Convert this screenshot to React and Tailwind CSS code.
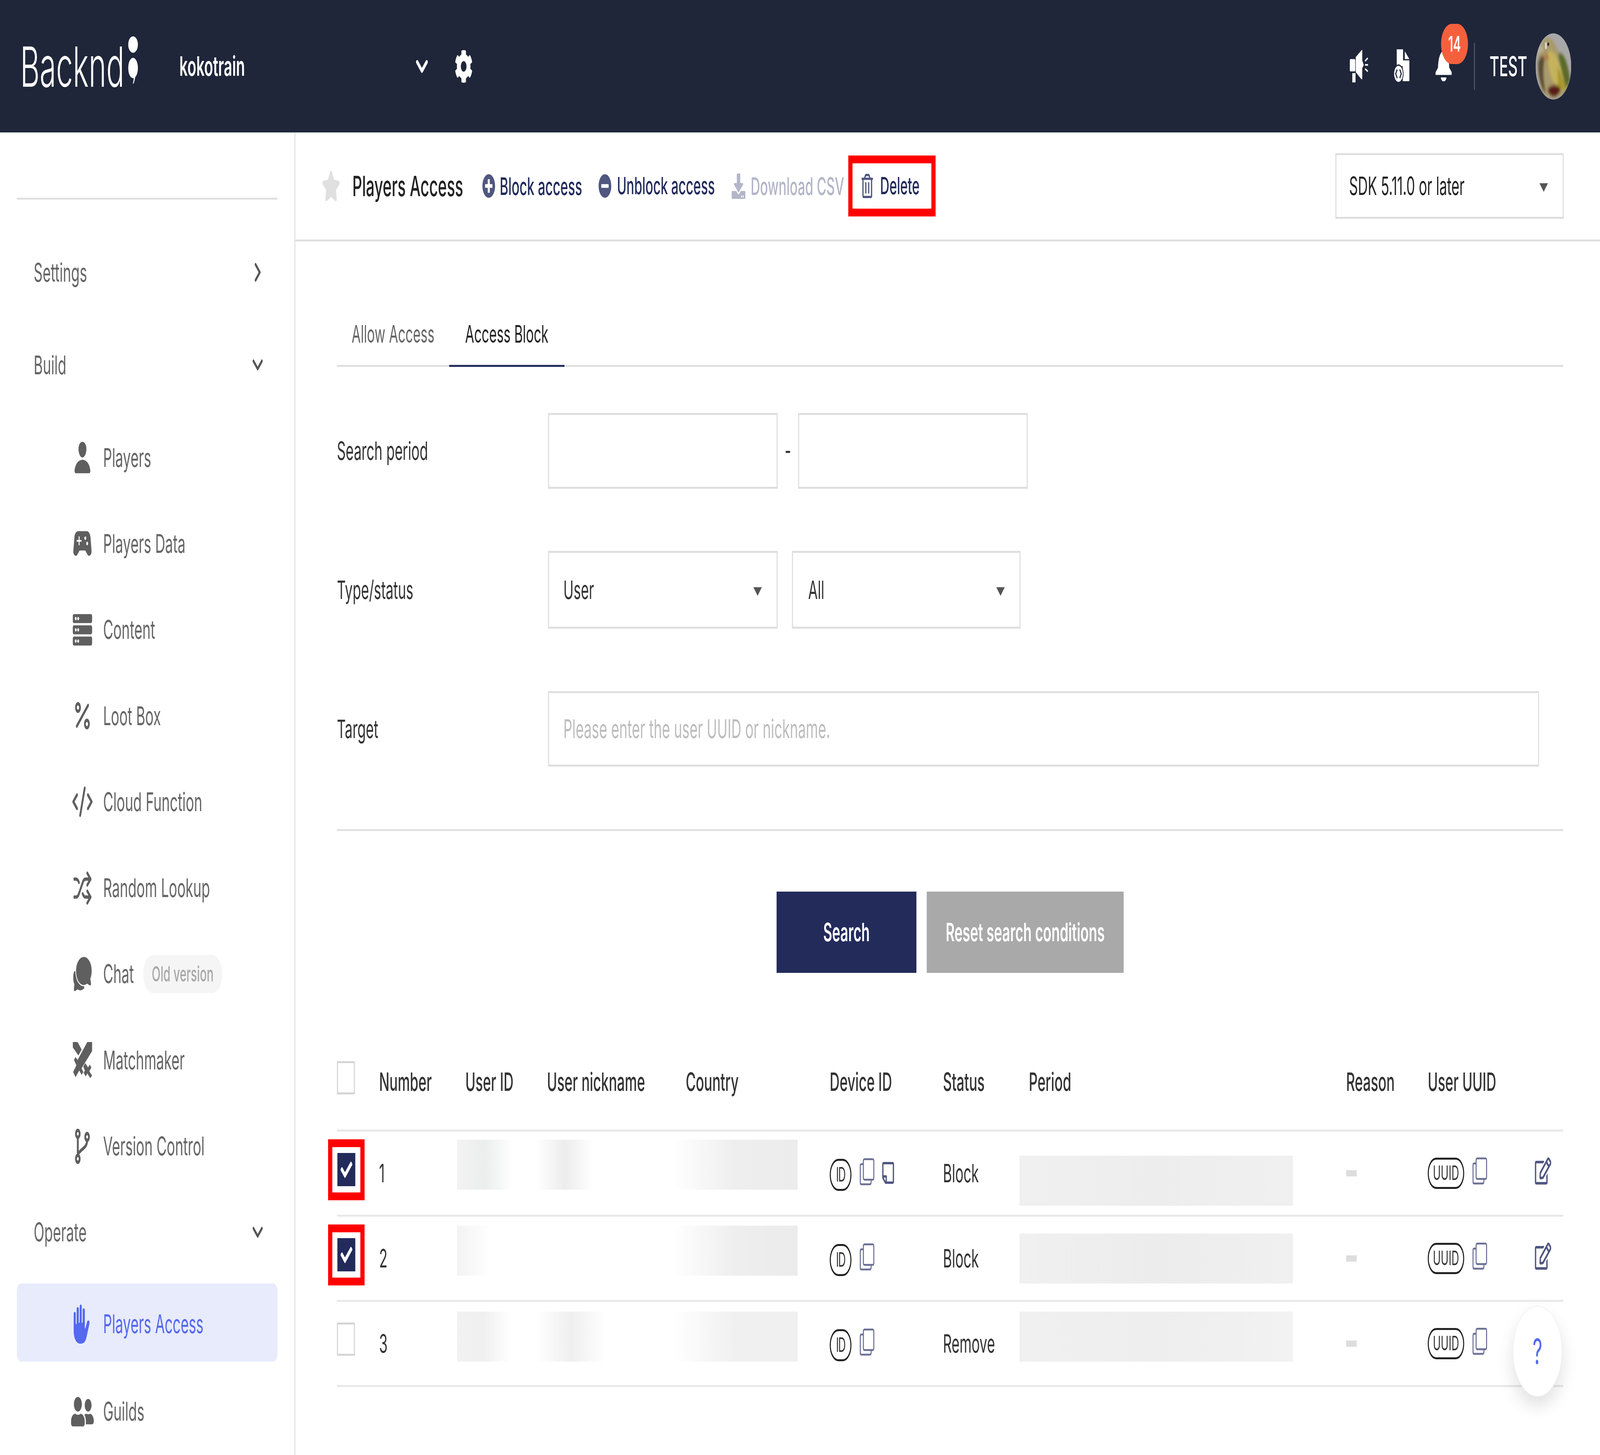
import React from "react";
import { ChevronDown, ChevronRight, Percent, CodeXml, Shuffle } from "lucide-react";
import {
  FaCog, FaStar, FaPlusCircle, FaMinusCircle, FaDownload, FaRegTrashAlt, FaRegEdit,
  FaRegStickyNote, FaCheck, FaServer, FaUserFriends,
} from "react-icons/fa";
import { IoPerson, IoChatbubbles, IoHandLeft } from "react-icons/io5";
import { MdSportsEsports } from "react-icons/md";

function Megaphone() {
  return (
    <svg viewBox="0 0 260 250" className="h-[83px] w-[87px] fill-white">
      <rect x="0" y="70" width="78" height="95" rx="12" />
      <path d="M85 55 L170 0 H178 V80 L200 115 L178 140 V225 H165 L85 170Z" />
      <rect x="36" y="178" width="46" height="72" />
      <path d="M218 85 L258 62 M218 115 H262 M218 145 L258 165" stroke="#fff" strokeWidth="13" fill="none" />
    </svg>
  );
}

function DocIcon() {
  return (
    <svg viewBox="0 0 225 260" className="h-[87px] w-[75px] fill-white">
      <path d="M45 0 H135 V85 H225 V245 H130 V130 H45Z" />
      <path d="M160 15 L225 75 H160Z" />
      <circle cx="70" cy="188" r="72" fill="#1f263a" />
      <circle cx="70" cy="188" r="62" />
      <path d="M52 155 L30 188 L52 221 M88 155 L110 188 L88 221" stroke="#1f263a" strokeWidth="14" fill="none" />
    </svg>
  );
}

function BellIcon() {
  return (
    <svg viewBox="0 0 230 240" className="h-[80px] w-[77px] fill-white">
      <path d="M115 0 C90 0 40 30 35 130 L0 165 V185 H230 V165 L195 130 C190 30 140 0 115 0Z" />
      <path d="M75 205 H155 C150 245 80 245 75 205Z" />
    </svg>
  );
}

function Avatar() {
  return (
    <svg viewBox="75 40 500 510" className="h-[172px] w-[168px]">
      <defs>
        <clipPath id="av"><circle cx="325" cy="295" r="252" /></clipPath>
        <filter id="soft"><feGaussianBlur stdDeviation="14" /></filter>
      </defs>
      <g clipPath="url(#av)">
        <rect x="0" y="0" width="700" height="700" fill="#a9a8a8" />
        <g filter="url(#soft)">
          <path d="M120 180 C160 70 260 50 330 110 C400 150 480 340 520 470 C450 560 220 560 150 470 C100 380 90 260 120 180Z" fill="#a89a6c" />
          <path d="M390 200 C460 170 530 260 560 400 L510 460 C460 380 420 290 390 200Z" fill="#5c6a2b" />
          <path d="M250 180 C340 150 420 260 500 470 C440 500 340 450 290 370 C250 300 240 240 250 180Z" fill="#c4b25c" />
          <path d="M380 300 C430 340 470 400 510 460 C470 490 420 470 390 440Z" fill="#a9982f" />
          <path d="M110 260 C150 210 180 200 200 240 C170 330 190 430 220 500 C140 470 100 340 110 260Z" fill="#5c4d38" />
          <path d="M240 470 C310 420 390 430 430 470 C390 540 280 550 240 470Z" fill="#5a1d12" />
          <path d="M190 220 C220 180 260 190 260 240 C240 260 200 250 190 220Z" fill="#b47c4a" />
          <path d="M100 170 C130 130 170 130 190 160 C170 190 130 190 100 210Z" fill="#bbb096" />
        </g>
        <rect x="205" y="112" width="28" height="50" fill="#d8d2c8" />
        <circle cx="252" cy="126" r="13" fill="#2c2520" />
      </g>
    </svg>
  );
}

function Swords() {
  return (
    <svg viewBox="0 0 96 96" className="size-[92px] fill-current">
      <path d="M96 0 H72 L24 48 L14 40 L6 48 L18 62 L2 80 L14 94 L32 76 L44 88 L52 80 L44 70 L96 24Z" />
      <path d="M0 0 H24 L44 20 L28 36 L0 14Z" />
      <path d="M62 56 L76 68 L84 60 L92 68 L82 78 L96 90 L86 96 L72 84 L64 92 L54 82 L60 76 L52 66Z" />
    </svg>
  );
}

function Branch() {
  return (
    <svg viewBox="0 0 24 24" className="size-[96px] fill-none stroke-current stroke-[2.2]">
      <circle cx="7" cy="4" r="2.2" />
      <circle cx="7" cy="20" r="2.2" />
      <circle cx="18" cy="6" r="2.2" />
      <path d="M7 6.2 V17.8 M18 8.2 C18 13 12 13 7 17" />
    </svg>
  );
}

function CopyIcon() {
  return (
    <svg viewBox="0 0 72 72" className="h-[70px] w-[72px] shrink-0 fill-none stroke-[#6b7096] stroke-[5]">
      <rect x="18" y="3" width="51" height="54" rx="5" />
      <path d="M18 16 H8 Q3 16 3 21 V64 Q3 69 8 69 H50 Q56 69 56 62 V57" />
    </svg>
  );
}

function NavItem({ icon, label, badge }) {
  return (
    <div className="flex h-[220.3px] items-center text-[#666666]">
      <div className="flex w-[489px] justify-end pr-[52px] text-[#5f5f5f]">{icon}</div>
      <span>{label}</span>
      {badge}
    </div>
  );
}

function Sidebar() {
  return (
    <aside className="h-full w-[1401px] shrink-0 border-r-[5px] border-[#e2e2e2] text-[66px]">
      <div className="ml-[80px] mt-[167px] h-[5px] w-[1236px] bg-[#e0e0e0]" />
      <div className="ml-[160px] mr-[150px] mt-[76px] flex h-[220px] items-center justify-between text-[#666666]">
        <span>Settings</span>
        <ChevronRight className="mr-[-16px] size-[80px] text-[#555555]" strokeWidth={2.4} />
      </div>
      <div className="ml-[160px] mr-[150px] mt-[17px] flex h-[220px] items-center justify-between text-[#666666]">
        <span>Build</span>
        <ChevronDown className="mr-[-16px] size-[80px] text-[#555555]" strokeWidth={2.4} />
      </div>
      <div className="mt-[17px]">
        <NavItem icon={<IoPerson className="size-[92px]" />} label="Players" />
        <NavItem icon={<MdSportsEsports className="size-[108px] mr-[-8px]" />} label="Players Data" />
        <NavItem icon={<FaServer className="size-[92px] -scale-x-100" />} label="Content" />
        <NavItem icon={<Percent className="size-[92px]" strokeWidth={2.2} />} label="Loot Box" />
        <NavItem icon={<CodeXml className="size-[104px] mr-[-6px]" strokeWidth={2} />} label="Cloud Function" />
        <NavItem icon={<Shuffle className="size-[92px]" strokeWidth={2.2} />} label="Random Lookup" />
        <NavItem
          icon={<IoChatbubbles className="size-[100px] mr-[-4px]" />}
          label="Chat"
          badge={
            <span className="ml-[44px] flex h-[98px] w-[375px] items-center justify-center rounded-full bg-[#f5f5f5] text-[54px] font-medium text-[#a8a8a8]">
              Old version
            </span>
          }
        />
        <NavItem icon={<Swords />} label="Matchmaker" />
        <NavItem icon={<Branch />} label="Version Control" />
      </div>
      <div className="ml-[160px] mr-[150px] flex h-[220px] items-center justify-between text-[#666666]">
        <span>Operate</span>
        <ChevronDown className="mr-[-16px] size-[80px] text-[#555555]" strokeWidth={2.4} />
      </div>
      <div className="ml-[80px] mt-[21px] flex h-[200px] w-[1236px] items-center rounded-[20px] bg-[#e8ebfb] pt-[8px] text-[#5468f0]">
        <div className="flex w-[409px] justify-end pr-[52px]">
          <IoHandLeft className="size-[100px]" />
        </div>
        <span>Players Access</span>
      </div>
      <div className="mt-[18px]">
        <NavItem icon={<FaUserFriends className="size-[108px] mr-[-8px]" />} label="Guilds" />
      </div>
    </aside>
  );
}

function Toolbar() {
  return (
    <div className="flex h-[279px] shrink-0 items-center border-b-[5px] border-[#dedede] pl-[125px] pr-[172px]">
      <FaStar className="size-[88px] text-[#e0e0e0]" />
      <span className="ml-[57px] w-[616px] text-[72px] font-medium text-[#222222]">Players Access</span>
      <div className="flex w-[551px] items-center gap-[21px] text-[62px] font-medium text-[#232b5b]">
        <FaPlusCircle className="size-[62px] text-[#4f5680]" />
        <span>Block access</span>
      </div>
      <div className="flex w-[632px] items-center gap-[26px] text-[61px] font-medium text-[#232b5b]">
        <FaMinusCircle className="size-[62px] text-[#4f5680]" />
        <span>Unblock access</span>
      </div>
      <div className="flex w-[553px] items-center gap-[25px] text-[62px] font-medium text-[#b3b6c8]">
        <FaDownload className="size-[65px]" />
        <span>Download CSV</span>
      </div>
      <div className="flex h-[156px] w-[414px] items-center gap-[30px] border-[20px] border-[#ff0000] pl-[39px] text-[61px] font-medium text-[#232b5b]">
        <FaRegTrashAlt className="size-[62px] text-[#4f5680]" />
        <span>Delete</span>
      </div>
      <div className="ml-auto flex h-[168px] w-[1083px] items-center justify-between border-[5px] border-[#dedede] pl-[60px] pr-[70px] text-[65px] text-[#222222]">
        <span>SDK 5.11.0 or later</span>
        <Caret />
      </div>
    </div>
  );
}

function Caret() {
  return <span className="mt-[8px] h-0 w-0 border-x-[20px] border-t-[22px] border-x-transparent border-t-[#555555]" />;
}

function Field({ className, children }) {
  return <div className={`flex items-center border-[5px] border-[#dedede] bg-white ${className}`}>{children}</div>;
}

function SearchForm() {
  return (
    <>
      <div className="mt-[5px] flex h-[316px] items-end border-b-[5px] border-[#e0e0e0] text-[62px]">
        <div className="flex h-[160px] w-[532px] items-center justify-center text-[#666666]">Allow Access</div>
        <div className="relative flex h-[160px] w-[547px] items-center justify-center text-[#222222]">
          Access Block
          <span className="absolute -bottom-[5px] left-0 right-0 h-[5px] bg-[#232b5b]" />
        </div>
      </div>
      <div className="mt-[118px] flex h-[194px] items-center text-[65px] text-[#333333]">
        <span className="w-[1001px]">Search period</span>
        <Field className="h-full w-[1089px]" />
        <span className="w-[97px] text-center">-</span>
        <Field className="h-full w-[1089px]" />
      </div>
      <div className="mt-[159px] flex h-[199px] items-center text-[65px] text-[#333333]">
        <span className="w-[1001px]">Type/status</span>
        <Field className="h-full w-[1089px] justify-between pl-[68px] pr-[70px]">
          <span>User</span>
          <Caret />
        </Field>
        <Field className="ml-[68px] h-full w-[1084px] justify-between pl-[72px] pr-[70px]">
          <span>All</span>
          <Caret />
        </Field>
      </div>
      <div className="mt-[160px] flex h-[193px] items-center text-[65px] text-[#333333]">
        <span className="w-[1001px]">Target</span>
        <Field className="h-full w-[4700px] pl-[68px] text-[66px] text-[#bdbdbd]">Please enter the user UUID or nickname.</Field>
      </div>
      <div className="mt-[160px] h-[5px] bg-[#e0e0e0]" />
      <div className="mt-[155px] flex h-[208px] gap-[49px] pl-[2085px] text-[65px] font-semibold text-white">
        <div className="flex w-[663px] items-center justify-center bg-[#232b5b]">Search</div>
        <div className="flex w-[934px] items-center justify-center bg-[#a9a9a9]">Reset search conditions</div>
      </div>
    </>
  );
}

const gridCols =
  "grid grid-cols-[200px_409px_387px_658px_683px_537px_407px_1505px_387px_508px_131px] items-center";

function Blur({ className }) {
  return <div className={`h-[128px] self-start bg-gradient-to-r ${className}`} />;
}

function Box({ checked }) {
  if (checked) {
    return (
      <div className="flex size-[85px] items-center justify-center bg-[#232b5b] text-white">
        <FaCheck className="size-[56px]" />
      </div>
    );
  }
  return <div className="size-[85px] border-[5px] border-[#d4d4d4] bg-white" />;
}

function Marked() {
  return (
    <div className="-ml-[42px] -mt-[18px] flex h-[156px] w-[173px] items-center justify-center border-[20px] border-[#ff0000]">
      <Box checked />
    </div>
  );
}

function IdCell({ note }) {
  return (
    <div className="flex items-center">
      <span className="mt-[8px] flex h-[82px] w-[103px] items-center justify-center rounded-full border-[5px] border-[#222222] text-[50px] tracking-[-3px]">
        ID
      </span>
      <div className="ml-[38px] -mt-[8px]"><CopyIcon /></div>
      {note && <FaRegStickyNote className="ml-[32px] -mt-[2px] size-[64px] -scale-y-100 rotate-180 text-[#4f5680]" />}
    </div>
  );
}

function UuidCell() {
  return (
    <div className="flex items-center">
      <span className="flex h-[80px] w-[173px] items-center justify-center rounded-full border-[5px] border-[#222222] text-[50px]">
        UUID
      </span>
      <div className="ml-[38px] -mt-[12px]"><CopyIcon /></div>
    </div>
  );
}

function Row({ box, num, status, idBlur, nickBlur, countryBlur, periodBlur, note, edit }) {
  return (
    <div className={`${gridCols} h-[218px] border-b-[5px] border-[#e8e8e8] text-[65px] text-[#333333]`}>
      {box}
      <span>{num}</span>
      <div className="-ml-[39px] self-start">{idBlur}</div>
      <div className="-ml-[50px] self-start">{nickBlur}</div>
      <div className="-ml-[61px] self-start">{countryBlur}</div>
      <IdCell note={note} />
      <span>{status}</span>
      <div className="-ml-[44px] self-start">{periodBlur}</div>
      <span className="h-[16px] w-[50px] bg-[#dddddd]" />
      <UuidCell />
      {edit ? <FaRegEdit className="-mt-[12px] size-[78px] text-[#4f5680]" /> : <span />}
    </div>
  );
}

function ResultTable() {
  return (
    <div className="text-[65px]">
      <div className={`${gridCols} mt-[157px] h-[249px] border-b-[5px] border-[#e8e8e8] font-medium text-[#333333]`}>
        <div className="-mt-[22px]"><Box /></div>
        {["Number", "User ID", "User nickname", "Country", "Device ID", "Status", "Period", "Reason", "User UUID"].map((h) => (
          <span key={h}>{h}</span>
        ))}
        <span />
      </div>
      <Row
        box={<Marked />}
        num="1"
        status="Block"
        note
        edit
        idBlur={<Blur className="mt-[21px] w-[262px] from-[#f2f3f2] via-[#eceded] to-white" />}
        nickBlur={<Blur className="mt-[21px] w-[266px] from-white via-[#ececec] to-white" />}
        countryBlur={<Blur className="mt-[21px] w-[592px] from-white via-[#eeeeee] to-[#ececec]" />}
        periodBlur={<Blur className="mt-[62px] w-[1297px] from-[#f0f0f0] via-[#ededed] to-[#f0f0f0]" />}
      />
      <Row
        box={<Marked />}
        num="2"
        status="Block"
        edit
        idBlur={<Blur className="mt-[23px] w-[160px] from-[#f3f3f3] to-white" />}
        nickBlur={null}
        countryBlur={<Blur className="mt-[23px] w-[592px] from-white via-[#eeeeee] to-[#ebebeb]" />}
        periodBlur={<Blur className="mt-[43px] w-[1297px] from-[#f0f0f0] via-[#ececec] to-[#f0f0f0]" />}
      />
      <Row
        box={<div className="-mt-[22px]"><Box /></div>}
        num="3"
        status="Remove"
        idBlur={<Blur className="mt-[25px] w-[252px] from-[#f1f1f1] via-[#f0f0f0] to-white" />}
        nickBlur={<Blur className="mt-[25px] w-[330px] from-white via-[#efefef] to-white" />}
        countryBlur={<Blur className="mt-[25px] w-[592px] from-white via-[#f0f0f0] to-[#f0f0f0]" />}
        periodBlur={<Blur className="mt-[25px] w-[1297px] from-[#f0f0f0] via-[#eeeeee] to-[#f2f2f2]" />}
      />
    </div>
  );
}

function Header() {
  return (
    <header className="flex h-[339px] shrink-0 items-center bg-[#1f263a] pl-[96px] pr-[137px] text-white">
      <div className="flex w-[755px] items-start">
        <span className="text-[142px] font-light leading-none">Backnd</span>
        <svg viewBox="0 0 46 122" className="ml-[18px] mt-[-6px] h-[122px] w-[46px] fill-white">
          <ellipse cx="23" cy="21" rx="23" ry="21" />
          <ellipse cx="23" cy="81" rx="23" ry="26" />
          <path d="M34 100 Q32 114 24 122 L22 120 Q28 110 26 100Z" />
        </svg>
      </div>
      <span className="w-[1105px] text-[69px] font-semibold">kokotrain</span>
      <ChevronDown className="size-[90px]" strokeWidth={2.8} />
      <FaCog className="ml-[110px] size-[86px]" />
      <div className="ml-auto flex items-center">
        <Megaphone />
        <div className="ml-[121px]"><DocIcon /></div>
        <div className="relative ml-[124px]">
          <BellIcon />
          <span className="absolute -right-[77px] -top-[69px] flex h-[103px] w-[128px] items-center justify-center rounded-full bg-[#f5603c] text-[55px] font-semibold">
            14
          </span>
        </div>
        <span className="ml-[106px] h-[120px] w-[3px] bg-[#6b7080]" />
        <span className="ml-[70px] text-[70px] font-medium">TEST</span>
        <div className="ml-[40px]"><Avatar /></div>
      </div>
    </header>
  );
}

export default function App() {
  // the browser can hand us a narrower window than the 7588x3724 the page is drawn for, so fit it
  const fit = `scale(${window.innerWidth / 7588}, ${window.innerHeight / 3724})`;
  return (
    <div className="h-screen w-screen overflow-hidden">
      <div
        className="relative flex h-[3724px] w-[7588px] origin-top-left flex-col overflow-hidden bg-white font-['Inter',sans-serif]"
        style={{ transform: fit }}
      >
        <Header />
        <div className="flex min-h-0 flex-1">
          <Sidebar />
          <main className="flex min-w-0 flex-1 flex-col">
            <Toolbar />
            <div className="pl-[197px] pr-[174px]">
              <SearchForm />
              <ResultTable />
            </div>
          </main>
        </div>
        <button className="absolute bottom-[149px] right-[180px] flex size-[233px] items-center justify-center rounded-full border-[2px] border-[#f2f2f2] bg-white text-[90px] text-[#5468f0] shadow-[0_25px_60px_rgba(0,0,0,0.12)]">
          ?
        </button>
      </div>
    </div>
  );
}
